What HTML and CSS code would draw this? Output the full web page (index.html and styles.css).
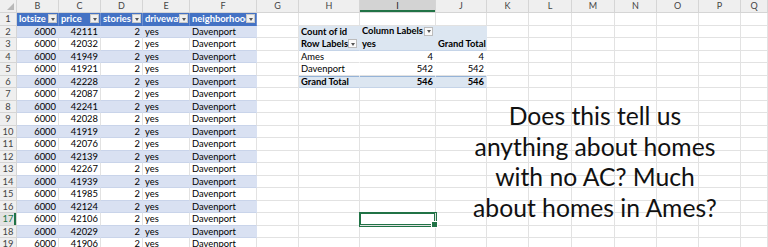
FILE: index.html
```html
<!DOCTYPE html>
<html>
<head>
<meta charset="utf-8">
<link rel="stylesheet" href="styles.css">
</head>
<body>
<div class="sheet">
  <div class="row hdr"><span class="corner"></span><span>B</span><span>C</span><span>D</span><span>E</span><span>F</span><span>G</span><span>H</span><span class="hsel">I</span><span>J</span><span>K</span><span>L</span><span>M</span><span>N</span><span>O</span><span>P</span><span>Q</span></div>
  <div class="row"><span class="rh">1</span><span class="th"><span class="lb">lotsize</span><i class="fb"></i></span><span class="th"><span class="lb">price</span><i class="fb"></i></span><span class="th"><span class="lb">stories</span><i class="fb"></i></span><span class="th"><span class="lb">driveway</span><i class="fb"></i></span><span class="th"><span class="lb">neighborhood</span><i class="fb"></i></span><span></span><span></span><span></span><span></span><span></span><span></span><span></span><span></span><span></span><span></span><span></span></div>
  <div class="row band"><span class="rh">2</span><span class="t n">6000</span><span class="t n">42111</span><span class="t n">2</span><span class="t">yes</span><span class="t">Davenport</span><span></span><span class="pv bold">Count of id</span><span class="pv bold flt"><span class="lb">Column Labels</span><i class="pb"></i></span><span class="pv"></span><span></span><span></span><span></span><span></span><span></span><span></span><span></span></div>
  <div class="row"><span class="rh">3</span><span class="t n">6000</span><span class="t n">42032</span><span class="t n">2</span><span class="t">yes</span><span class="t">Davenport</span><span></span><span class="pv pvb bold flt"><span class="lb">Row Labels</span><i class="pb"></i></span><span class="pv pvb bold">yes</span><span class="pv pvb bold n">Grand Total</span><span></span><span></span><span></span><span></span><span></span><span></span><span></span></div>
  <div class="row band"><span class="rh">4</span><span class="t n">6000</span><span class="t n">41949</span><span class="t n">2</span><span class="t">yes</span><span class="t">Davenport</span><span></span><span class="pw">Ames</span><span class="pw n">4</span><span class="pw n">4</span><span></span><span></span><span></span><span></span><span></span><span></span><span></span></div>
  <div class="row"><span class="rh">5</span><span class="t n">6000</span><span class="t n">41921</span><span class="t n">2</span><span class="t">yes</span><span class="t">Davenport</span><span></span><span class="pw">Davenport</span><span class="pw n">542</span><span class="pw n">542</span><span></span><span></span><span></span><span></span><span></span><span></span><span></span></div>
  <div class="row band"><span class="rh">6</span><span class="t n">6000</span><span class="t n">42228</span><span class="t n">2</span><span class="t">yes</span><span class="t">Davenport</span><span></span><span class="pv pvt bold">Grand Total</span><span class="pv pvt bold n">546</span><span class="pv pvt bold n">546</span><span></span><span></span><span></span><span></span><span></span><span></span><span></span></div>
  <div class="row"><span class="rh">7</span><span class="t n">6000</span><span class="t n">42087</span><span class="t n">2</span><span class="t">yes</span><span class="t">Davenport</span><span></span><span></span><span></span><span></span><span></span><span></span><span></span><span></span><span></span><span></span><span></span></div>
  <div class="row band"><span class="rh">8</span><span class="t n">6000</span><span class="t n">42241</span><span class="t n">2</span><span class="t">yes</span><span class="t">Davenport</span><span></span><span></span><span></span><span></span><span></span><span></span><span></span><span></span><span></span><span></span><span></span></div>
  <div class="row"><span class="rh">9</span><span class="t n">6000</span><span class="t n">42028</span><span class="t n">2</span><span class="t">yes</span><span class="t">Davenport</span><span></span><span></span><span></span><span></span><span></span><span></span><span></span><span></span><span></span><span></span><span></span></div>
  <div class="row band"><span class="rh">10</span><span class="t n">6000</span><span class="t n">41919</span><span class="t n">2</span><span class="t">yes</span><span class="t">Davenport</span><span></span><span></span><span></span><span></span><span></span><span></span><span></span><span></span><span></span><span></span><span></span></div>
  <div class="row"><span class="rh">11</span><span class="t n">6000</span><span class="t n">42076</span><span class="t n">2</span><span class="t">yes</span><span class="t">Davenport</span><span></span><span></span><span></span><span></span><span></span><span></span><span></span><span></span><span></span><span></span><span></span></div>
  <div class="row band"><span class="rh">12</span><span class="t n">6000</span><span class="t n">42139</span><span class="t n">2</span><span class="t">yes</span><span class="t">Davenport</span><span></span><span></span><span></span><span></span><span></span><span></span><span></span><span></span><span></span><span></span><span></span></div>
  <div class="row"><span class="rh">13</span><span class="t n">6000</span><span class="t n">42267</span><span class="t n">2</span><span class="t">yes</span><span class="t">Davenport</span><span></span><span></span><span></span><span></span><span></span><span></span><span></span><span></span><span></span><span></span><span></span></div>
  <div class="row band"><span class="rh">14</span><span class="t n">6000</span><span class="t n">41939</span><span class="t n">2</span><span class="t">yes</span><span class="t">Davenport</span><span></span><span></span><span></span><span></span><span></span><span></span><span></span><span></span><span></span><span></span><span></span></div>
  <div class="row"><span class="rh">15</span><span class="t n">6000</span><span class="t n">41985</span><span class="t n">2</span><span class="t">yes</span><span class="t">Davenport</span><span></span><span></span><span></span><span></span><span></span><span></span><span></span><span></span><span></span><span></span><span></span></div>
  <div class="row band"><span class="rh">16</span><span class="t n">6000</span><span class="t n">42124</span><span class="t n">2</span><span class="t">yes</span><span class="t">Davenport</span><span></span><span></span><span></span><span></span><span></span><span></span><span></span><span></span><span></span><span></span><span></span></div>
  <div class="row"><span class="rh rsel">17</span><span class="t n">6000</span><span class="t n">42106</span><span class="t n">2</span><span class="t">yes</span><span class="t">Davenport</span><span></span><span></span><span class="sel"></span><span></span><span></span><span></span><span></span><span></span><span></span><span></span><span></span></div>
  <div class="row band"><span class="rh">18</span><span class="t n">6000</span><span class="t n">42029</span><span class="t n">2</span><span class="t">yes</span><span class="t">Davenport</span><span></span><span></span><span></span><span></span><span></span><span></span><span></span><span></span><span></span><span></span><span></span></div>
  <div class="row"><span class="rh">19</span><span class="t n">6000</span><span class="t n">41906</span><span class="t n">2</span><span class="t">yes</span><span class="t">Davenport</span><span></span><span></span><span></span><span></span><span></span><span></span><span></span><span></span><span></span><span></span><span></span></div>
  <div class="note">Does this tell us<br>anything about homes<br>with no AC? Much<br>about homes in Ames?</div>
</div>
</body>
</html>
```
FILE: styles.css
```css
html, body {
  margin: 0;
  padding: 0;
  background: #fff;
}
body {
  font-family: Lato, "Liberation Sans", sans-serif;
  overflow: hidden;
}
.sheet {
  position: relative;
  width: 768px;
  height: 247px;
  overflow: hidden;
}
.row {
  display: grid;
  grid-template-columns: 17px 42px 42px 42px 47px 67px 42px 61px 76px 51px 42px 43px 43px 42px 42px 42px 27px;
  height: 12.5px;
}
.row > span {
  box-sizing: border-box;
  border-right: 1px solid #e2e2e2;
  border-bottom: 1px solid #e2e2e2;
  font-size: 9.4px;
  line-height: 12px;
  padding: 0 2px;
  white-space: nowrap;
  overflow: hidden;
  color: #000;
}
.hdr {
  height: 13px;
}
.hdr > span {
  background: #efefef;
  border-color: #d5d5d5;
  text-align: center;
  color: #444;
  font-size: 9px;
  line-height: 12px;
}
.hdr > .hsel {
  background: #d3d3d3;
  color: #222;
  box-shadow: inset 0 -2px 0 #217346;
}
.hdr > .corner {
  position: relative;
}
.corner::after {
  content: "";
  position: absolute;
  right: 2px;
  bottom: 2px;
  border-left: 7px solid transparent;
  border-bottom: 7px solid #b8b8b8;
}
.row > .rh {
  background: #efefef;
  border-color: #d5d5d5;
  text-align: center;
  color: #444;
  padding: 0;
  font-size: 9.4px;
}
.row > .rsel {
  background: #e3e3e3;
  color: #217346;
  box-shadow: inset -2px 0 0 #217346;
}
.row > .n {
  text-align: right;
}
.row > .bold, .bold {
  font-weight: bold;
}
.row > .th {
  background: #4472c4;
  color: #fff;
  font-weight: bold;
  border-right-color: #6f90d0;
  border-bottom-color: #4472c4;
  display: flex;
  align-items: center;
  padding-right: 1px;
}
.lb {
  flex: 1;
  min-width: 0;
  overflow: hidden;
}
.fb, .pb {
  position: relative;
  flex: none;
  width: 9px;
  height: 9px;
  box-sizing: border-box;
  background: #f0f0f0;
  border: 1px solid #c8c8c8;
}
.fb::after, .pb::after {
  content: "";
  position: absolute;
  left: 1.5px;
  top: 2.5px;
  border-left: 2.5px solid transparent;
  border-right: 2.5px solid transparent;
  border-top: 3px solid #555;
}
.pb {
  background: #fafafa;
  border-color: #bcbcbc;
}
.row > .flt {
  display: flex;
  align-items: center;
}
.row.band > .t {
  background: #d9e1f2;
  border-right-color: #d9e1f2;
  border-bottom-color: #c9d4ea;
}
.row > .t {
  border-bottom-color: #c9d4ea;
}
.row > .pv {
  background: #dce6f1;
  border-right-color: #dce6f1;
  border-bottom-color: #dce6f1;
}
.row > .pvb {
  border-bottom-color: #c5d4e8;
}
.row > .pvt {
  box-shadow: inset 0 1px 0 #95b3d7;
  border-bottom-color: #c5d4e8;
}
.row > .pw {
  border-right-color: #fff;
}
.row > .sel {
  position: relative;
  overflow: visible;
  box-shadow: 0 0 0 1px #217346, inset 0 0 0 1px #217346;
}
.sel::after {
  content: "";
  position: absolute;
  right: -3px;
  bottom: -3px;
  width: 5px;
  height: 5px;
  background: #217346;
  border: 1px solid #fff;
}
.note {
  position: absolute;
  left: 470px;
  top: 101px;
  width: 250px;
  text-align: center;
  font-family: Lato, "Liberation Sans", sans-serif;
  font-size: 24.7px;
  line-height: 30.5px;
  color: #111;
}
```
